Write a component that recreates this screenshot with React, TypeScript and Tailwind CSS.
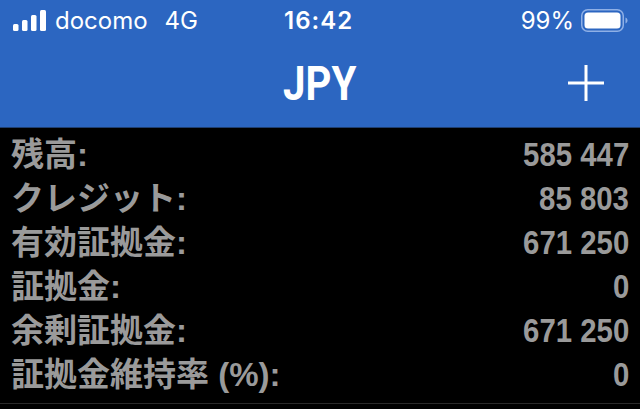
const rows = [
  { label: "残高:", value: "585 447" },
  { label: "クレジット:", value: "85 803" },
  { label: "有効証拠金:", value: "671 250" },
  { label: "証拠金:", value: "0" },
  { label: "余剰証拠金:", value: "671 250" },
  { label: "証拠金維持率 (%):", value: "0" },
]

function Signal() {
  return (
    <svg width="33" height="21" viewBox="0 0 33 21" fill="white">
      <rect x="0" y="14" width="5.500" height="7" rx="1.500" />
      <rect x="9" y="10" width="5.500" height="11" rx="1.500" />
      <rect x="18" y="5" width="5.500" height="16" rx="1.500" />
      <rect x="27" y="0" width="6" height="21" rx="1.500" />
    </svg>
  )
}

function Battery() {
  return (
    <svg width="47" height="23" viewBox="0 0 47 23" fill="none">
      <rect x="0.750" y="0.750" width="41.500" height="21.500" rx="6" stroke="#8fb0e6" strokeWidth="1.500" />
      <rect x="3.500" y="3.500" width="36" height="16" rx="3.500" fill="white" />
      <path d="M44.500 8.500v6c1.200-.4 2-1.600 2-3s-.8-2.600-2-3z" fill="#8fb0e6" />
    </svg>
  )
}

export default function App() {
  return (
    <div className="w-[640px] h-[409px] overflow-hidden bg-black font-['Liberation_Sans','Noto_Sans_CJK_JP',sans-serif]">
      <header className="relative h-[128px] bg-[#2c66c1] border-b border-[#1f3f70] text-white">
        <div className="flex h-[40px] items-center justify-between pl-[13px] pr-[12px] font-['Inter',sans-serif] text-[24px] leading-[26px]">
          <div className="flex items-center gap-[9px]">
            <Signal />
            <span className="mt-[1px]">docomo</span>
            <span className="mt-[1px] ml-[8px]">4G</span>
          </div>
          <div className="flex items-center gap-[7px]">
            <span className="mt-[1px]">99%</span>
            <Battery />
          </div>
        </div>
        <span className="absolute left-[284px] top-[8px] font-['Inter',sans-serif] text-[24px] leading-[26px] font-semibold tracking-[1px]">16:42</span>
        <div className="flex h-[87px] items-center justify-center">
          <h1 className="text-[49px] leading-none font-bold font-['Roboto',sans-serif] scale-x-[0.82]">JPY</h1>
        </div>
        <svg className="absolute left-[568px] top-[65px]" width="36" height="36" viewBox="0 0 36 36" fill="white">
          <rect x="16.500" y="0" width="3" height="36" />
          <rect x="0" y="16.500" width="36" height="3" />
        </svg>
      </header>
      <div className="flex flex-col pt-[4px] border-b border-[#2a2a2a] h-[276px]">
        {rows.map((row) => (
          <div key={row.label} className="flex h-[44px] flex-none items-center justify-between pl-[11px] pr-[11px] text-[#9a9a9a] text-[33px] leading-none">
            <span className="font-bold">{row.label}</span>
            <span className="font-bold origin-right scale-x-[0.89]">{row.value}</span>
          </div>
        ))}
      </div>
    </div>
  )
}
